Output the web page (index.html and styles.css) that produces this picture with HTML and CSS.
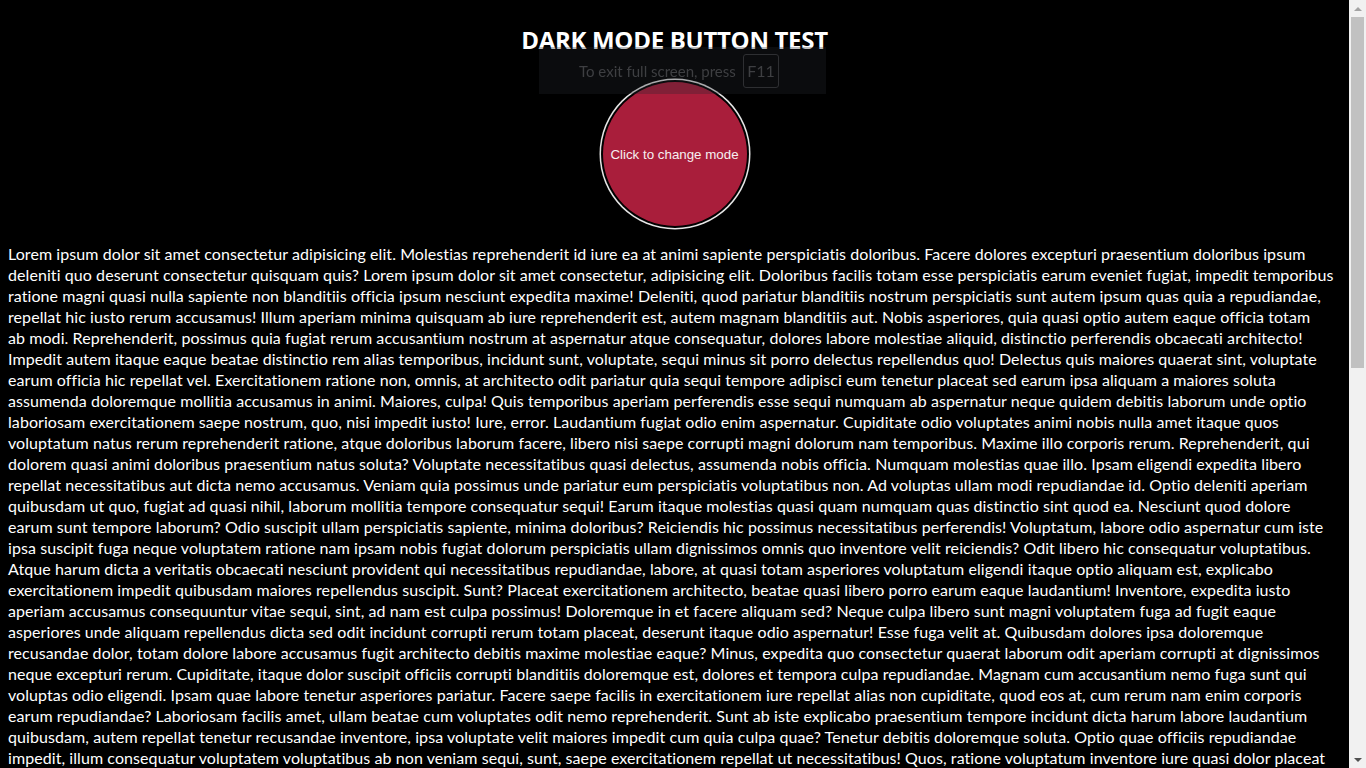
FILE: index.html
```html
<!DOCTYPE html>
<html lang="en">
<head>
<meta charset="utf-8">
<title>Dark Mode Button Test</title>
<link rel="stylesheet" href="styles.css">
</head>
<body>
<main class="page">
  <h1 class="title">DARK MODE BUTTON TEST</h1>
  <div class="btn-wrap">
    <button class="mode-btn" type="button">Click to change mode</button>
  </div>
  <p class="text">
    <span class="ln">Lorem ipsum dolor sit amet consectetur adipisicing elit. Molestias reprehenderit id iure ea at animi sapiente perspiciatis doloribus. Facere dolores excepturi praesentium doloribus ipsum</span>
    <span class="ln">deleniti quo deserunt consectetur quisquam quis? Lorem ipsum dolor sit amet consectetur, adipisicing elit. Doloribus facilis totam esse perspiciatis earum eveniet fugiat, impedit temporibus</span>
    <span class="ln">ratione magni quasi nulla sapiente non blanditiis officia ipsum nesciunt expedita maxime! Deleniti, quod pariatur blanditiis nostrum perspiciatis sunt autem ipsum quas quia a repudiandae,</span>
    <span class="ln">repellat hic iusto rerum accusamus! Illum aperiam minima quisquam ab iure reprehenderit est, autem magnam blanditiis aut. Nobis asperiores, quia quasi optio autem eaque officia totam</span>
    <span class="ln">ab modi. Reprehenderit, possimus quia fugiat rerum accusantium nostrum at aspernatur atque consequatur, dolores labore molestiae aliquid, distinctio perferendis obcaecati architecto!</span>
    <span class="ln">Impedit autem itaque eaque beatae distinctio rem alias temporibus, incidunt sunt, voluptate, sequi minus sit porro delectus repellendus quo! Delectus quis maiores quaerat sint, voluptate</span>
    <span class="ln">earum officia hic repellat vel. Exercitationem ratione non, omnis, at architecto odit pariatur quia sequi tempore adipisci eum tenetur placeat sed earum ipsa aliquam a maiores soluta</span>
    <span class="ln">assumenda doloremque mollitia accusamus in animi. Maiores, culpa! Quis temporibus aperiam perferendis esse sequi numquam ab aspernatur neque quidem debitis laborum unde optio</span>
    <span class="ln">laboriosam exercitationem saepe nostrum, quo, nisi impedit iusto! Iure, error. Laudantium fugiat odio enim aspernatur. Cupiditate odio voluptates animi nobis nulla amet itaque quos</span>
    <span class="ln">voluptatum natus rerum reprehenderit ratione, atque doloribus laborum facere, libero nisi saepe corrupti magni dolorum nam temporibus. Maxime illo corporis rerum. Reprehenderit, qui</span>
    <span class="ln">dolorem quasi animi doloribus praesentium natus soluta? Voluptate necessitatibus quasi delectus, assumenda nobis officia. Numquam molestias quae illo. Ipsam eligendi expedita libero</span>
    <span class="ln">repellat necessitatibus aut dicta nemo accusamus. Veniam quia possimus unde pariatur eum perspiciatis voluptatibus non. Ad voluptas ullam modi repudiandae id. Optio deleniti aperiam</span>
    <span class="ln">quibusdam ut quo, fugiat ad quasi nihil, laborum mollitia tempore consequatur sequi! Earum itaque molestias quasi quam numquam quas distinctio sint quod ea. Nesciunt quod dolore</span>
    <span class="ln">earum sunt tempore laborum? Odio suscipit ullam perspiciatis sapiente, minima doloribus? Reiciendis hic possimus necessitatibus perferendis! Voluptatum, labore odio aspernatur cum iste</span>
    <span class="ln">ipsa suscipit fuga neque voluptatem ratione nam ipsam nobis fugiat dolorum perspiciatis ullam dignissimos omnis quo inventore velit reiciendis? Odit libero hic consequatur voluptatibus.</span>
    <span class="ln">Atque harum dicta a veritatis obcaecati nesciunt provident qui necessitatibus repudiandae, labore, at quasi totam asperiores voluptatum eligendi itaque optio aliquam est, explicabo</span>
    <span class="ln">exercitationem impedit quibusdam maiores repellendus suscipit. Sunt? Placeat exercitationem architecto, beatae quasi libero porro earum eaque laudantium! Inventore, expedita iusto</span>
    <span class="ln">aperiam accusamus consequuntur vitae sequi, sint, ad nam est culpa possimus! Doloremque in et facere aliquam sed? Neque culpa libero sunt magni voluptatem fuga ad fugit eaque</span>
    <span class="ln">asperiores unde aliquam repellendus dicta sed odit incidunt corrupti rerum totam placeat, deserunt itaque odio aspernatur! Esse fuga velit at. Quibusdam dolores ipsa doloremque</span>
    <span class="ln">recusandae dolor, totam dolore labore accusamus fugit architecto debitis maxime molestiae eaque? Minus, expedita quo consectetur quaerat laborum odit aperiam corrupti at dignissimos</span>
    <span class="ln">neque excepturi rerum. Cupiditate, itaque dolor suscipit officiis corrupti blanditiis doloremque est, dolores et tempora culpa repudiandae. Magnam cum accusantium nemo fuga sunt qui</span>
    <span class="ln">voluptas odio eligendi. Ipsam quae labore tenetur asperiores pariatur. Facere saepe facilis in exercitationem iure repellat alias non cupiditate, quod eos at, cum rerum nam enim corporis</span>
    <span class="ln">earum repudiandae? Laboriosam facilis amet, ullam beatae cum voluptates odit nemo reprehenderit. Sunt ab iste explicabo praesentium tempore incidunt dicta harum labore laudantium</span>
    <span class="ln">quibusdam, autem repellat tenetur recusandae inventore, ipsa voluptate velit maiores impedit cum quia culpa quae? Tenetur debitis doloremque soluta. Optio quae officiis repudiandae</span>
    <span class="ln">impedit, illum consequatur voluptatem voluptatibus ab non veniam sequi, sunt, saepe exercitationem repellat ut necessitatibus! Quos, ratione voluptatum inventore iure quasi dolor placeat</span>
  </p>
</main>
<aside class="scrollbar" aria-hidden="true">
  <div class="sb-arrow sb-up"></div>
  <div class="sb-track"><div class="sb-thumb"></div></div>
  <div class="sb-arrow sb-down"></div>
</aside>
<div class="fs-notice">
  <span class="fs-text">To exit full screen, press</span>
  <span class="fs-key">F11</span>
</div>
</body>
</html>
```
FILE: styles.css
```css
html, body {
  height: 100%;
  overflow: hidden;
}

body {
  margin: 0;
  display: flex;
  background: #000;
  color: #fff;
  font-family: "Lato", "Noto Sans", sans-serif;
}

.page {
  flex: 1;
  min-width: 0;
  padding: 0 8px;
  overflow: hidden;
}

.title {
  margin: 24px 0 0;
  font-family: "Open Sans", "Noto Sans", sans-serif;
  font-size: 24px;
  font-weight: 700;
  line-height: 32px;
  letter-spacing: -0.3px;
  text-align: center;
  color: #fff;
}

.btn-wrap {
  display: flex;
  justify-content: center;
  margin-top: 26px;
}

.mode-btn {
  width: 144px;
  height: 144px;
  padding: 0;
  border: none;
  border-radius: 50%;
  background: #a91e3b;
  color: #f6eef0;
  font-family: "Liberation Sans", Arial, sans-serif;
  font-size: 13.333px;
  box-shadow: 0 0 0 2px #000, 0 0 0 3.5px #e6e6e6;
  cursor: pointer;
}

.text {
  margin: 17px 0 0;
  font-size: 16px;
  line-height: 21px;
  letter-spacing: 0.075px;
}

.ln {
  display: block;
  white-space: nowrap;
}

/* scrollbar (Windows style) */
.scrollbar {
  width: 17px;
  flex: none;
  height: 100vh;
  display: flex;
  flex-direction: column;
  background: #f1f1f1;
}

.sb-arrow {
  height: 17px;
  flex: none;
  display: flex;
  align-items: center;
  justify-content: center;
}

.sb-up::before,
.sb-down::before {
  content: "";
  width: 0;
  height: 0;
  border-left: 4px solid transparent;
  border-right: 4px solid transparent;
}

.sb-up::before {
  border-bottom: 4px solid #a3a3a3;
}

.sb-down::before {
  border-top: 4px solid #505050;
}

.sb-track {
  flex: 1;
  padding: 0 2px;
}

.sb-thumb {
  height: 351px;
  background: #c1c1c1;
}

/* browser full-screen notice overlay */
.fs-notice {
  position: fixed;
  top: 47px;
  left: 539px;
  width: 287px;
  height: 47px;
  box-sizing: border-box;
  padding: 0 0 0 40px;
  display: flex;
  align-items: center;
  gap: 9px;
  background: rgba(38, 41, 48, 0.3);
  font-family: "Lato", "Noto Sans", sans-serif;
  font-size: 15px;
  color: #3e3f42;
}

.fs-text {
  flex: none;
  width: 155px;
  white-space: nowrap;
}

.fs-key {
  flex: none;
  width: 36px;
  height: 34px;
  box-sizing: border-box;
  display: flex;
  align-items: center;
  justify-content: center;
  border: 1px solid #2e2f32;
  border-radius: 3px;
  font-size: 16px;
}
```
